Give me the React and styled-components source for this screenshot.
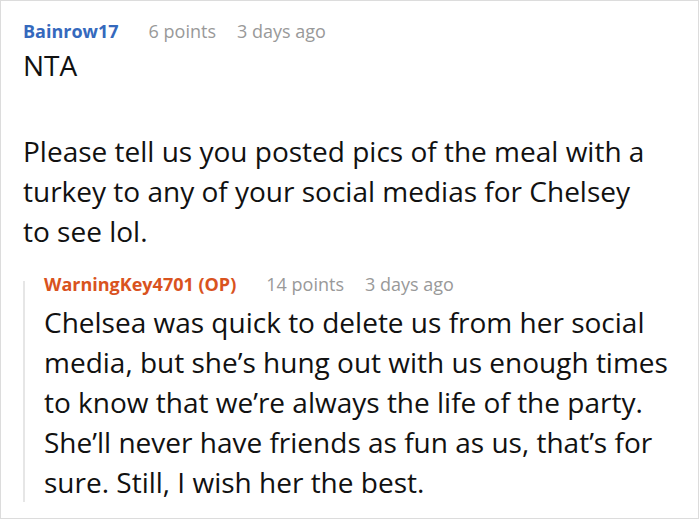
import React from "react";
import styled, { createGlobalStyle } from "styled-components";

const Global = createGlobalStyle`
  html, body {
    margin: 0;
    padding: 0;
    background: #fff;
  }
  body {
    font-family: "Open Sans", "Noto Sans", sans-serif;
    color: #111;
  }
`;

const Frame = styled.div`
  box-sizing: border-box;
  width: 699px;
  height: 519px;
  border: 1px solid #dcdcdc;
  padding: 16px 8px 0 22px;
  overflow: hidden;
`;

const Comment = styled.div`
  display: flex;
  flex-direction: column;
`;

const Meta = styled.div`
  display: flex;
  align-items: baseline;
  gap: 21px;
  font-size: 18px;
  line-height: 28px;
  margin-top: ${(p) => p.$mt || 0}px;
  margin-bottom: ${(p) => p.$mb || 0}px;
`;

const User = styled.span`
  font-weight: 700;
  margin-right: 9px;
  color: ${(p) => (p.$op ? "#d9531e" : "#3569bd")};
`;

const Info = styled.span`
  color: #999;
`;

const Body = styled.div`
  font-size: 28px;
  line-height: 40px;
  color: #111;
  max-width: ${(p) => (p.$max ? `${p.$max}px` : "none")};

  p {
    margin: 0;
  }
  p + p {
    margin-top: 46px;
  }
`;

const Reply = styled.div`
  margin-top: 30px;
  border-left: 2px solid #e6e6e6;
  padding-left: 19px;
  display: flex;
  flex-direction: column;
`;

export default function App() {
  return (
    <>
      <Global />
      <Frame>
        <Comment>
          <Meta>
            <User>Bainrow17</User>
            <Info>6 points</Info>
            <Info>3 days ago</Info>
          </Meta>
          <Body $max={630}>
            <p>NTA</p>
            <p>
              Please tell us you posted pics of the meal with a turkey to any
              of your social medias for Chelsey to see lol.
            </p>
          </Body>
          <Reply>
            <Meta $mt={-11} $mb={4}>
              <User $op>WarningKey4701 (OP)</User>
              <Info>14 points</Info>
              <Info>3 days ago</Info>
            </Meta>
            <Body>
              <p>
                Chelsea was quick to delete us from her social media, but she’s
                hung out with us enough times to know that we’re always the life
                of the party. She’ll never have friends as fun as us, that’s for
                sure. Still, I wish her the best.
              </p>
            </Body>
          </Reply>
        </Comment>
      </Frame>
    </>
  );
}
